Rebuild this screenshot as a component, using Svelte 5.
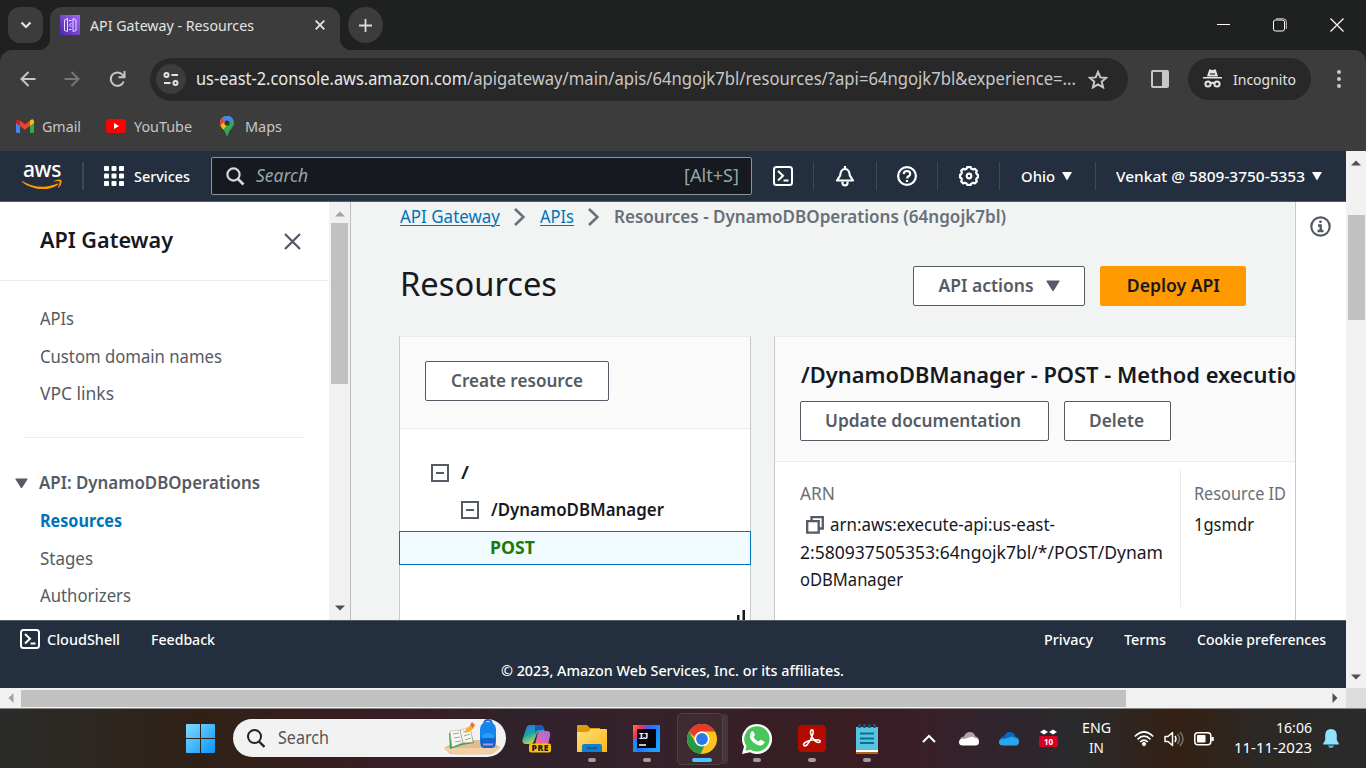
<script>
  // Scales a run of text horizontally so that it fills the given width.
  function fit(node, width) {
    const natural = node.getBoundingClientRect().width;
    node.style.width = `${width}px`;
    node.style.transform = `scaleX(${width / natural})`;
  }

  const topLinks = [
    ['APIs', 34],
    ['Custom domain names', 182],
    ['VPC links', 74]
  ];
  const apiLinks = [
    ['Resources', 82, true],
    ['Stages', 53],
    ['Authorizers', 91]
  ];
</script>

{#snippet t(text, width)}<span class="fit" use:fit={width}>{text}</span>{/snippet}

{#snippet shell()}
  <svg width="20" height="20" viewBox="0 0 20 20" fill="none" stroke="#fff" stroke-width="2">
    <rect x="1" y="1" width="18" height="18" rx="2.5" />
    <path d="M5 5l5 4.700L5 14.500M10.500 14.500H15.500" />
  </svg>
{/snippet}

{#snippet tri(dir, color)}
  <svg width="10" height="10" viewBox="0 0 10 10" fill={color}>
    {#if dir === 'up'}<path d="M0 7.500L5 2.500L10 7.500z" />
    {:else if dir === 'down'}<path d="M0 2.500h10L5 7.500z" />
    {:else if dir === 'caret'}<path d="M0 1h10L5 9.500z" />
    {:else if dir === 'left'}<path d="M7.500 0v10L2.500 5z" />
    {:else}<path d="M2.500 0v10L7.500 5z" />{/if}
  </svg>
{/snippet}

<div class="screen">
  <header class="titlebar">
    <button class="tabsearch"><svg width="12" height="8" viewBox="0 0 12 8" fill="none" stroke="#e3e3e3" stroke-width="2.200"><path d="M1.500 1.500L6 6l4.500-4.500" /></svg></button>
    <div class="tab">
      <svg class="fav" width="20" height="20" viewBox="0 0 20 20">
        <defs><linearGradient id="fv" x1="0" y1="1" x2="1" y2="0"><stop offset="0" stop-color="#4d27a8" /><stop offset="1" stop-color="#a166ff" /></linearGradient></defs>
        <rect width="20" height="20" fill="url(#fv)" />
        <g fill="none" stroke="#e6dcfb" stroke-width="1"><path d="M7.500 3.500L4.500 5v10.500L7.500 16.500zM13 3.500l3 1.500v10.500l-3 1zM9 5.500h2.500M9 14.500h2.500M11.500 8L9.500 10l2 2" /></g>
      </svg>
      <span class="tabtitle">{@render t('API Gateway - Resources', 164)}</span>
      <svg class="tabx" width="10" height="10" viewBox="0 0 10 10" stroke="#e3e3e3" stroke-width="1.800"><path d="M.7.7l8.600 8.600M9.300.7L.7 9.300" /></svg>
    </div>
    <button class="newtab"><svg width="13" height="13" viewBox="0 0 13 13" stroke="#dadada" stroke-width="1.800"><path d="M6.500 0v13M0 6.500h13" /></svg></button>
    <div class="winctl">
      <svg width="13" height="13" viewBox="0 0 13 13" stroke="#fff"><path d="M0 6.500h13" /></svg>
      <svg width="14" height="14" viewBox="0 0 14 14" fill="none" stroke="#fff"><rect x=".5" y="2" width="11" height="11" rx="2" /><path d="M3 .8h7.500a2.800 2.800 0 0 1 2.800 2.800V11" stroke="#ccc" /></svg>
      <svg width="14" height="14" viewBox="0 0 14 14" stroke="#fff" stroke-width="1.200"><path d="M.5.5l13 13M13.500.5l-13 13" /></svg>
    </div>
  </header>

  <div class="toolbar">
    <svg class="back" width="16" height="16" viewBox="0 0 16 16" fill="none" stroke="#c7c7c7" stroke-width="2"><path d="M15.500 8H2M8.500 1L1.500 8l7 7" /></svg>
    <svg class="fwd" width="16" height="16" viewBox="0 0 16 16" fill="none" stroke="#777" stroke-width="2"><path d="M.5 8H14M7.500 1l7 7-7 7" /></svg>
    <svg class="reload" width="17" height="17" viewBox="0 0 17 17" fill="none" stroke="#c7c7c7" stroke-width="2"><path d="M14.700 10.500a6.700 6.700 0 1 1-1-6.500L15.500 6" /><path d="M15.500 0v6.300H9.500" /></svg>
    <div class="omni">
      <span class="site"><svg width="16" height="14" viewBox="0 0 16 14" fill="none" stroke="#e3e3e3" stroke-width="2"><circle cx="3.500" cy="3" r="2" /><path d="M8.500 3H15M1 11h6.500" /><circle cx="12.500" cy="11" r="2" /></svg></span>
      <span class="url"><b>{@render t('us-east-2.console.aws.amazon.com', 271)}</b>{@render t('/apigateway/main/apis/64ngojk7bl/resources/?api=64ngojk7bl&experience=...', 609)}</span>
      <svg class="star" width="20" height="19" viewBox="0 0 20 19" fill="none" stroke="#c7c7c7" stroke-width="2"><path d="M10 2l2.300 5.400 5.800.5-4.400 3.800 1.400 5.700L10 14.300l-5.100 3.100 1.400-5.700L1.900 7.900l5.800-.5z" /></svg>
    </div>
    <svg class="side" width="18" height="18" viewBox="0 0 18 18"><rect x="1" y="1" width="16" height="16" rx="1" fill="none" stroke="#c7c7c7" stroke-width="2" /><path d="M11 1h6v16h-6z" fill="#c7c7c7" /></svg>
    <div class="incog">
      <svg width="19" height="19" viewBox="0 0 19 19" fill="#e3e3e3"><path d="M4 7.500L6 1.200Q6.500 0 7.500.5L9.500 1.300 11.500.5Q12.500 0 13 1.200L15 7.500zM0 8h19v1.600H0z" /><path d="M7 5h5" stroke="#282828" stroke-width="1.200" /><g fill="none" stroke="#e3e3e3" stroke-width="2"><circle cx="5" cy="15" r="2.600" /><circle cx="14" cy="15" r="2.600" /><path d="M7.500 14.500q2-1.500 4 0" /></g></svg>
      <span>{@render t('Incognito', 63)}</span>
    </div>
    <svg class="dots" width="4" height="18" viewBox="0 0 4 18" fill="#c7c7c7"><circle cx="2" cy="2" r="2" /><circle cx="2" cy="9" r="2" /><circle cx="2" cy="16" r="2" /></svg>
  </div>

  <nav class="bookmarks">
    <span class="mark"><svg width="18" height="14" viewBox="0 0 18 14"><path d="M0 2v10.500Q0 14 1.500 14H4V5z" fill="#4285f4" /><path d="M18 2v10.500q0 1.500-1.500 1.500H14V5z" fill="#34a853" /><path d="M14 1.500V7l4-3V2q-.5-3-3-1.200z" fill="#fbbc04" /><path d="M4 1.500V7L0 4V2Q.5-1 3 .8z" fill="#c5221f" /><path d="M4 1.500l5 3.800 5-3.800V7l-5 3.800L4 7z" fill="#ea4335" /></svg>{@render t('Gmail', 39)}</span>
    <span class="mark"><svg width="20" height="14" viewBox="0 0 20 14"><rect width="20" height="14" rx="3.500" fill="#f00" /><path d="M8 4v6l5-3z" fill="#fff" /></svg>{@render t('YouTube', 58)}</span>
    <span class="mark"><svg width="14" height="20" viewBox="0 0 14 20"><clipPath id="pin"><path d="M7 0a7 7 0 0 1 7 7c0 4.500-5 6.500-6.300 12.200q-.7 1.600-1.400 0C5 13.500 0 11.500 0 7a7 7 0 0 1 7-7z" /></clipPath><g clip-path="url(#pin)"><path d="M0 0h14v20H0z" fill="#34a853" /><path d="M0 0h14L3 13H0z" fill="#fbbc04" /><path d="M0 0h12L2 11H0z" fill="#4285f4" /><path d="M0 0h5L7 7l-6 4H0z" fill="#ea4335" /><path d="M3 0h11v5L7 7 2.500 2.500z" fill="#4285f4" /><path d="M0 10l5-5 3 3-6 7z" fill="#fbbc04" /></g><circle cx="7" cy="7" r="2.600" fill="#343434" /></svg>{@render t('Maps', 37)}</span>
  </nav>

  <div class="viewport">
    <div class="page">
      <header class="aws">
        <div class="logo">
          <span>aws</span>
          <svg width="40" height="11" viewBox="0 0 40 11" fill="#f90"><path d="M.7 2.200C12 9 25 9.200 35.500 4.600q1.500-.5.8.8C28 12 10.500 12 .2 3q-.6-1 .5-.8z" /><path d="M31.500 2.200Q37-.8 39.500 1.200q.7 3.800-2.600 7.300-1 .5-.7-.5 2-4.500 1.300-5.500t-5.500 0q-1 .3-.5-.3z" /></svg>
        </div>
        <i class="sep s0"></i>
        <svg class="grid" width="20" height="20" viewBox="0 0 20 20" fill="#fff">{#each [0, 7.5, 15] as y}{#each [0, 7.5, 15] as x}<rect {x} {y} width="5" height="5" rx="1" />{/each}{/each}</svg>
        <span class="services">{@render t('Services', 56)}</span>
        <div class="search">
          <svg width="19" height="19" viewBox="0 0 19 19" fill="none" stroke="#d5dbdb" stroke-width="2.200"><circle cx="7.500" cy="7.500" r="6.100" /><path d="M12 12l5.500 5.500" stroke-width="2.600" /></svg>
          <em>{@render t('Search', 52)}</em><span>{@render t('[Alt+S]', 55)}</span>
        </div>
        <div class="tools">
          <span class="cell c1">{@render shell()}</span>
          <span class="cell c2"><svg width="20" height="21" viewBox="0 0 20 21" fill="none" stroke="#fff" stroke-width="2.200"><path d="M10 0v3M2 14.500h16L14.800 9.500C14.500 5.500 13 3 10 3S5.500 5.500 5.200 9.500z" stroke-linejoin="round" /><path d="M7.500 15.500v1.800q0 2 2.500 2t2.500-2v-1.800" /></svg></span>
          <span class="cell c3"><svg width="20" height="20" viewBox="0 0 20 20" fill="none" stroke="#fff" stroke-width="2.200"><circle cx="10" cy="10" r="8.900" /><path d="M6.800 8c0-4 6.400-4 6.400 0 0 2.500-3.200 2-3.200 4.500" /><path d="M10 14v2" /></svg></span>
          <span class="cell c4"><svg width="20" height="20" viewBox="0 0 20 20" fill="none" stroke="#fff" stroke-width="2.200" stroke-linejoin="round"><path d="M8.200 1.200h3.600l.6 1.600 1.700.7 1.700-.7 2 2-.7 1.700.7 1.700 1.200.6v2.600l-1.200.6-.7 1.700.7 1.700-2 2-1.700-.7-1.700.7-.6 1.400H8.200l-.6-1.400-1.700-.7-1.700.7-2-2 .7-1.700-.7-1.700-1.200-.6V8.800l1.200-.6.7-1.700-.7-1.700 2-2 1.700.7 1.700-.7z" /><circle cx="10" cy="10" r="2.300" /></svg></span>
          <span class="cell c5">{@render t('Ohio', 34)}{@render tri('caret', '#fff')}</span>
          <span class="cell c6">{@render t('Venkat @ 5809-3750-5353', 189)}{@render tri('caret', '#fff')}</span>
        </div>
      </header>

      <div class="body">
        <aside>
          <div class="sidehead"><h2>{@render t('API Gateway', 133)}</h2><svg width="17" height="17" viewBox="0 0 17 17" stroke="#545b64" stroke-width="2.300"><path d="M1 1l15 15M16 1L1 16" /></svg></div>
          <ul>{#each topLinks as [name, w]}<li>{@render t(name, w)}</li>{/each}</ul>
          <hr />
          <div class="group"><svg width="13" height="11" viewBox="0 0 13 11" fill="#545b64"><path d="M1 .5h11q1 0 .4 1L7.300 9.500q-.8 1.200-1.600 0L.6 1.500Q0 .5 1 .5z" /></svg>{@render t('API: DynamoDBOperations', 221)}</div>
          <ul class="sub">{#each apiLinks as [name, w, on]}<li class:on>{@render t(name, w)}</li>{/each}</ul>
        </aside>
        <div class="vscroll inner">{@render tri('up', '#a3a3a3')}<div class="thumb"></div>{@render tri('down', '#505050')}</div>

        <main>
          <div class="crumbs">
            <span class="crumb">{@render t('API Gateway', 100)}</span>
            <svg width="11" height="18" viewBox="0 0 11 18" fill="none" stroke="#687078" stroke-width="2.600"><path d="M1 1l8.500 8L1 17" /></svg>
            <span class="crumb">{@render t('APIs', 34)}</span>
            <svg width="11" height="18" viewBox="0 0 11 18" fill="none" stroke="#687078" stroke-width="2.600"><path d="M1 1l8.500 8L1 17" /></svg>
            <strong>{@render t('Resources - DynamoDBOperations (64ngojk7bl)', 392)}</strong>
          </div>
          <div class="heading">
            <h1>{@render t('Resources', 157)}</h1>
            <button class="btn actions">{@render t('API actions', 95)}<svg width="14" height="12" viewBox="0 0 14 12" fill="#545b64"><path d="M1 .5h12q1 0 .4 1L7.800 10.500q-.8 1.200-1.600 0L.6 1.500Q0 .5 1 .5z" /></svg></button>
            <button class="btn primary">{@render t('Deploy API', 93)}</button>
          </div>
          <div class="panels">
            <section class="tree">
              <div class="treehead"><button class="btn">{@render t('Create resource', 132)}</button></div>
              <div class="node root"><i class="minus"></i>{@render t('/', 8)}</div>
              <div class="node child"><i class="minus"></i>{@render t('/DynamoDBManager', 173)}</div>
              <div class="node post">{@render t('POST', 45)}</div>
              <svg class="grip" width="8" height="10" viewBox="0 0 8 10" fill="#16191f"><path d="M0 5h2.500v5H0zM5.500 0H8v10H5.500z" /></svg>
            </section>
            <section class="method">
              <div class="methodhead">
                <h3>{@render t('/DynamoDBManager - POST - Method execution', 509)}</h3>
                <div class="btnrow"><button class="btn upd">{@render t('Update documentation', 196)}</button><button class="btn del">{@render t('Delete', 55)}</button></div>
              </div>
              <div class="details">
                <div class="arn">
                  <p class="label">{@render t('ARN', 35)}</p>
                  <p class="first"><svg width="18" height="18" viewBox="0 0 18 18" fill="none" stroke="#545b64" stroke-width="2.300"><path d="M1.200 5.200h11.500v11.500H1.200zM5.500 5V1.200h11.300v11.300H13" /></svg>{@render t('arn:aws:execute-api:us-east-', 225)}</p>
                  <p>{@render t('2:580937505353:64ngojk7bl/*/POST/Dynam', 363)}</p>
                  <p>{@render t('oDBManager', 103)}</p>
                </div>
                <div class="rid"><p class="label">{@render t('Resource ID', 92)}</p><p>{@render t('1gsmdr', 60)}</p></div>
              </div>
            </section>
          </div>
        </main>
        <div class="help"><svg width="21" height="21" viewBox="0 0 21 21" fill="none" stroke="#545b64" stroke-width="2.200"><circle cx="10.500" cy="10.500" r="9.200" /><path d="M10.500 4.500v2.600M8 9.500h2.700v5.500M7.500 15h6" stroke-width="2.400" /></svg></div>
      </div>

      <footer>
        <div class="links"><span class="cs">{@render shell()}{@render t('CloudShell', 73)}</span><span class="fb">{@render t('Feedback', 64)}</span><span class="right">{@render t('Privacy', 49)}</span><span>{@render t('Terms', 42)}</span><span>{@render t('Cookie preferences', 129)}</span></div>
        <div class="copy">{@render t('© 2023, Amazon Web Services, Inc. or its affiliates.', 343)}</div>
      </footer>
    </div>
    <div class="vscroll outer">{@render tri('up', '#505050')}<div class="thumb"></div>{@render tri('down', '#505050')}</div>
  </div>
  <div class="hscroll">{@render tri('left', '#a3a3a3')}<div class="thumb"></div>{@render tri('right', '#505050')}<i></i></div>

  <div class="taskbar">
    <svg class="win" width="29" height="29" viewBox="0 0 29 29"><defs><linearGradient id="wg" x1="0" y1="0" x2="1" y2="1"><stop offset="0" stop-color="#7fdcff" /><stop offset="1" stop-color="#0a93f8" /></linearGradient></defs><path d="M1 0h13v14H0V1q0-1 1-1zM15 0h13q1 0 1 1v13H15zM0 15h14v14H1q-1 0-1-1zM15 15h14v13q0 1-1 1H15z" fill="url(#wg)" /></svg>
    <div class="tsearch">
      <svg width="18" height="19" viewBox="0 0 18 19" fill="none" stroke="#222" stroke-width="2"><circle cx="7.500" cy="7.500" r="6.500" /><path d="M12 12.500l5.500 5.500" stroke-width="2.400" /></svg>
      {@render t('Search', 51)}
      <svg class="art" width="58" height="33" viewBox="0 0 58 33"><path d="M1 26Q14 17 33 18t24 8l-8 6q-20 1-42 0z" fill="#e2bd91" /><path d="M1 26h56l-6 5q-22 2-43 0z" fill="#f1d0a8" /><path d="M6 11l11-3 10-2 4 15-12 2-12 4z" fill="#3d9c47" /><path d="M7 9l10-1 10-3 3 15-11 1-10 4z" fill="#f7f7f3" stroke="#b9bcae" stroke-width=".7" /><path d="M17 8l3 13M10 12l6-1M11 16l6-1M12 20l6-1M20 10l6-2M21 14l6-2M22 18l6-2" stroke="#8b9385" stroke-width=".8" fill="none" /><path d="M22 11l1-4 5-4 3 3-5 4z" fill="#ffad23" /><path d="M27 3l2-3 3 3-2 3z" fill="#ef645c" /><path d="M41 3Q41-2 45-2t4 5" stroke="#2165c9" stroke-width="1.800" fill="none" /><rect x="37" y="0" width="16" height="26" rx="7" fill="#1386ed" /><rect x="37.500" y="13" width="15" height="13" rx="4" fill="#0f65c9" /><path d="M38.500 16q0-5 6.500-5t6.500 5" fill="#299cf5" /><path d="M40 22.500h10" stroke="#b18bed" stroke-width="2" /></svg>
    </div>
    <div class="apps">
      <div class="app"><svg width="30" height="28" viewBox="0 0 30 28"><defs><linearGradient id="ca" x1="0" y1="0" x2=".5" y2="1"><stop offset="0" stop-color="#2374e0" /><stop offset=".5" stop-color="#1aa5a8" /><stop offset="1" stop-color="#d4dc45" /></linearGradient><linearGradient id="cb" x1="1" y1="0" x2="0" y2="1"><stop offset="0" stop-color="#a866f0" /><stop offset="1" stop-color="#f56a88" /></linearGradient></defs><path d="M8 0h10q3 0 4 4l1 3h-5q-3 0-4 4l-2 5q-1 3-4 3H4q-5 0-3-6L4 4q1-4 4-4z" fill="url(#ca)" /><path d="M13 0h5q3 0 4 5h-5q-3 0-4 4z" fill="#1856c5" /><path d="M19 6h6q4 0 3 5l-2 9H13l2-9q1-5 4-5z" fill="url(#cb)" /><rect x="7" y="18.500" width="22" height="9" rx="2" fill="#fcbf0a" /><text x="18" y="26.200" text-anchor="middle" font-size="8.500" font-weight="900" textLength="17" fill="#16191f">PRE</text></svg></div>
      <div class="app run"><svg width="30" height="27" viewBox="0 0 30 27"><defs><linearGradient id="fo" x1="0" y1="0" x2="1" y2="1"><stop offset="0" stop-color="#ffe080" /><stop offset="1" stop-color="#f9b716" /></linearGradient></defs><path d="M0 1q0-1 1-1h9l3 3h10v10H0z" fill="#dd9c0c" /><path d="M0 7h11l3-3h15q1 0 1 1v22H0z" fill="url(#fo)" /><path d="M5 27v-6q0-2 2-2h16q2 0 2 2v6z" fill="#117fcb" /><path d="M10 23h10" stroke="#07518f" stroke-width="1.500" /></svg></div>
      <div class="app run"><svg width="27" height="27" viewBox="0 0 27 27"><defs><linearGradient id="ij" x1="0" y1="0" x2="1" y2=".6"><stop offset="0" stop-color="#fd8224" /><stop offset=".25" stop-color="#f72b63" /><stop offset=".5" stop-color="#246dff" /><stop offset="1" stop-color="#18a5fc" /></linearGradient></defs><rect width="27" height="27" fill="url(#ij)" /><path d="M0 14h4v13H0z" fill="#198cf5" /><rect x="4" y="4" width="19" height="19" fill="#09040c" /><text x="5.500" y="14" font-size="9.500" font-weight="700" textLength="10" font-family="Liberation Mono" fill="#fff">IJ</text><path d="M6 20h7" stroke="#fff" stroke-width="1.500" /></svg></div>
      <div class="app active"><svg width="30" height="30" viewBox="0 0 30 30"><circle cx="15" cy="15" r="15" fill="#fcc31e" /><path d="M2 7.500A15 15 0 0 1 28 7.500H15q-6 0-7.500 5.500z" fill="#e33b2e" /><path d="M2 7.500L8.500 18.700q3 4.500 9 3L13.500 29.900A15 15 0 0 1 2 7.500z" fill="#279847" /><circle cx="15" cy="15" r="7.500" fill="#fff" /><circle cx="15" cy="15" r="5.900" fill="#2979e8" /></svg></div>
      <div class="app run"><svg width="30" height="30" viewBox="0 0 30 30"><path d="M15 0a15 15 0 1 1-7 28.200L0 30l2-7.500A15 15 0 0 1 15 0z" fill="#fff" /><path d="M15 2.300A12.600 12.600 0 1 1 8.500 25.700L3.300 26.800 4.500 22A12.600 12.600 0 0 1 15 2.300z" fill="#48c65c" /><path d="M8.500 8.500q1.500-2 3-1l1.500 3.500-1.500 2q2 3.500 5 4.500l2-1.800 3.800 1.800q.8 1-1.200 3-2.500 2.200-7-.3Q8.500 17 7.800 12.500z" fill="#fff" /></svg></div>
      <div class="app run"><svg width="28" height="27" viewBox="0 0 28 27"><rect width="28" height="27" rx="4" fill="#b30b00" /><path d="M6 20.500q-1.500-1.500 2-3.500c4-2 8-2.600 12.500-2q3 .8 1 2.300-2 .9-5-2Q13 11.500 12.500 8q0-3.200 1.600-3.200t.8 4.200Q13 15.500 9 20q-2 1.500-3 .5z" stroke="#fff" stroke-width="1.600" fill="none" /></svg></div>
      <div class="app run"><svg width="22" height="30" viewBox="0 0 22 30"><path d="M0 3h22v26H0z" fill="#58c4df" /><path d="M0 26h22v2H0z" fill="#fff" /><path d="M0 28h22v2H0z" fill="#b7641c" /><path d="M3.500 0v4M8.500 0v4M13.500 0v4M18.500 0v4" stroke="#075e80" stroke-width="2.400" /><path d="M4 9.500h14M4 14.500h14M4 19h14" stroke="#08708f" stroke-width="2" /></svg></div>
    </div>
    <div class="tray">
      <svg width="14" height="9" viewBox="0 0 14 9" fill="none" stroke="#fff" stroke-width="2"><path d="M1 8l6-6 6 6" /></svg>
      <svg class="cl" width="20" height="14" viewBox="0 0 20 14"><path d="M2 9q-2-4 3-4.500Q6.500 0 11 0q4 0 5.500 4.500Q20 5 20 9z" fill="#aaa5a8" /><path d="M0 10.500Q0 6 5 7l5-1.500q3-1.500 6 .5 4 .5 4 4 0 3.500-4 3.500H4q-4 0-4-3z" fill="#fff" /></svg>
      <svg class="cl" width="20" height="14" viewBox="0 0 20 14"><path d="M2 9q-2-4 3-4.500Q6.500 0 11 0q4 0 5.500 4.500Q20 5 20 9z" fill="#0867c8" /><path d="M0 10.500Q0 6 5 7l5-1.500q3-1.500 6 .5 4 .5 4 4 0 3.500-4 3.500H4q-4 0-4-3z" fill="#28a8ea" /></svg>
      <svg class="bad" width="19" height="18" viewBox="0 0 19 18"><path d="M1 3L5 .5l4 2.500-4 2.500zM18 3L14 .5 10 3l4 2.500z" fill="#fff" /><rect y="7" width="19" height="11" rx="2" fill="#d70022" /><text x="9.500" y="15.500" text-anchor="middle" font-size="8" font-weight="700" fill="#fff">10</text></svg>
      <div class="lang"><span>{@render t('ENG', 29)}</span><span>{@render t('IN', 15)}</span></div>
      <svg class="wifi" width="20" height="15" viewBox="0 0 20 15" fill="none" stroke="#fff" stroke-width="1.700"><path d="M.8 5.500q9.200-9 18.400 0M3.500 8.300q6.500-6.300 13 0M6.200 11q3.800-3.600 7.600 0" /><circle cx="10" cy="13" r="1.200" fill="#fff" /></svg>
      <svg class="vol" width="20" height="16" viewBox="0 0 20 16" fill="none" stroke="#fff" stroke-width="1.500"><path d="M1 5.500h3L8.500 1.500v13L4 10.500H1z" stroke-linejoin="round" /><path d="M11 5q2 3 0 6" /><path d="M13.500 3q4 5 0 10M16 1q6 7 0 14" stroke="#77706c" /></svg>
      <svg class="bat" width="20" height="14" viewBox="0 0 20 14" fill="none" stroke="#fff" stroke-width="1.500"><rect x=".8" y=".8" width="16" height="12" rx="3" /><rect x="3" y="3" width="8.500" height="7.600" rx="1" fill="#fff" stroke="none" /><path d="M18.500 5v4" stroke-width="2.500" /></svg>
      <div class="clock"><span>{@render t('16:06', 36)}</span><span>{@render t('11-11-2023', 78)}</span></div>
      <svg class="bell" width="16" height="19" viewBox="0 0 16 19" fill="#8fe3ff"><path d="M8 0q5.500 0 5.800 6v5l2 3.500q.4 1-1 1H1.200q-1.400 0-1-1l2-3.500V6Q2.500 0 8 0z" /><path d="M5 16.500h6q-.5 2.500-3 2.500t-3-2.500z" fill="#4fb8e0" /></svg>
    </div>
  </div>
</div>

<style>
  :global(body) { margin: 0; overflow: hidden; }
  .screen { width: 1366px; height: 768px; overflow: hidden; display: flex; flex-direction: column; font: 17.300px/24px "Noto Sans", "Open Sans", sans-serif; background: #1f2020; color: #16191f; }
  .screen * { box-sizing: border-box; }
  svg { display: block; flex: none; }
  button { font: inherit; border: 0; padding: 0; }
  h1, h2, h3, p, ul { margin: 0; padding: 0; }
  .fit { display: inline-block; white-space: nowrap; transform-origin: 0 50%; vertical-align: top; flex: none; }

  .titlebar { height: 50px; flex: none; display: flex; background: #1f2120; padding: 7px 22px 0 8px; font-size: 15px; }
  .tabsearch { width: 35px; height: 36px; border-radius: 12px; background: #3c3c3c; display: flex; align-items: center; justify-content: center; }
  .tab { position: relative; margin-left: 7px; width: 290px; height: 43px; background: #3c3c3c; border-radius: 12px 12px 0 0; display: flex; padding: 8px 15px 0 10px; color: #e3e3e3; }
  .tab::before, .tab::after { content: ""; position: absolute; bottom: 0; width: 12px; height: 12px; }
  .tab::before { left: -12px; background: radial-gradient(circle at 0 0, transparent 12px, #3c3c3c 12.500px); }
  .tab::after { right: -12px; background: radial-gradient(circle at 100% 0, transparent 12px, #3c3c3c 12.500px); }
  .tabtitle { margin: -2px auto 0 10px; }
  .tabx { margin-top: 5px; }
  .newtab { width: 35px; height: 36px; margin-left: 8px; border-radius: 50%; background: #3c3c3c; display: flex; align-items: center; justify-content: center; }
  .winctl { margin-left: auto; display: flex; gap: 43px; padding-top: 11px; }
  .toolbar { height: 58px; flex: none; background: #3c3c3c; border-radius: 12px 12px 0 0; display: flex; align-items: center; padding: 0 25px 0 20px; color: #e3e3e3; }
  .fwd { margin-left: 28px; }
  .reload { margin-left: 29px; }
  .omni { width: 978px; height: 43px; margin-left: 24px; border-radius: 22px; background: #282828; display: flex; align-items: center; padding: 0 20px 0 6px; }
  .site { width: 30px; height: 30px; border-radius: 50%; background: #3c3c3c; display: flex; align-items: center; justify-content: center; }
  .url { display: flex; margin-left: 10px; color: #c7c7c7; }
  .url b { font-weight: 400; color: #e9e9e9; }
  .star { margin-left: auto; }
  .side { margin-left: 23px; }
  .incog { width: 123px; height: 42px; margin-left: 19px; border-radius: 21px; background: #282828; display: flex; align-items: center; padding: 0 0 1px 15px; font-size: 15px; }
  .incog > span { margin-left: 11px; }
  .dots { margin-left: auto; }
  .bookmarks { height: 43px; flex: none; background: #3c3c3c; display: flex; padding: 5px 0 0 16px; font-size: 15px; color: #c7c7c7; }
  .mark { display: flex; align-items: center; height: 26px; margin-right: 25px; gap: 8px; padding-bottom: 1px; }
  .mark:nth-child(2) { margin-right: 28px; }
  .mark:nth-child(3) { gap: 11px; }

  .viewport { height: 537px; flex: none; display: flex; }
  .page { width: 1346px; display: flex; flex-direction: column; background: #f2f3f3; }
  .aws { height: 51px; flex: none; background: #232f3e; border-bottom: 1px solid #545b64; display: flex; align-items: center; color: #fff; font-size: 15px; font-weight: 500; padding-left: 22px; }
  .logo { width: 40px; }
  .logo span { display: block; font: 500 21px/18px "Noto Sans"; letter-spacing: -.4px; padding-left: 1px; margin-top: -2px; }
  .logo svg { margin-top: 1px; }
  .sep { width: 2px; height: 28px; background: #414750; margin: 0 21px 0 20px; }
  .s0 { margin-right: 20px; }
  .services { margin-left: 10px; }
  .search { width: 541px; height: 38px; margin-left: 21px; border: 1px solid #879596; border-radius: 2px; background: #16191f; display: flex; align-items: center; padding: 0 12px 0 14px; color: #95a5a6; font-size: 17.300px; font-weight: 400; }
  .search em { margin-left: 11px; }
  .search > span { margin-left: auto; }
  .tools { display: flex; align-items: center; }
  .cell { height: 28px; display: flex; align-items: center; border-right: 1px solid #414750; }
  .c1 { width: 62px; padding-left: 21px; }
  .c2 { width: 63px; padding-left: 21px; }
  .c3 { width: 61px; padding-left: 20px; }
  .c4 { width: 62px; padding-left: 21px; }
  .c5 { width: 96px; padding-left: 21px; gap: 7px; }
  .c6 { padding-left: 20px; gap: 7px; border: 0; }

  .body { height: 418px; flex: none; display: flex; overflow: hidden; }
  aside { width: 329px; background: #fff; color: #545b64; overflow: hidden; }
  .sidehead { height: 79px; border-bottom: 1px solid #eaeded; display: flex; align-items: center; justify-content: space-between; padding: 0 28px 0 40px; }
  h2 { font-size: 22px; font-weight: 600; color: #16191f; line-height: 28px; margin-top: -4px; }
  ul { list-style: none; padding: 19px 0 0 40px; }
  li { height: 37.500px; line-height: 37.500px; }
  hr { border: 0; height: 1px; background: #eaeded; margin: 24.500px 25px 0; }
  .group { display: flex; align-items: center; gap: 11px; font-weight: 600; padding-left: 15px; height: 38px; margin-top: 26px; }
  .sub { padding-top: 0; }
  .on { color: #0073bb; font-weight: 700; }
  .vscroll { background: #f1f1f1; display: flex; flex-direction: column; align-items: center; }
  .vscroll .thumb { background: #c1c1c1; }
  .inner { width: 22px; border-right: 1px solid #b9bfc3; padding: 7px 0; flex: none; }
  .inner .thumb { width: 17px; height: 161px; margin: 4px 0 auto; }
  .outer { width: 20px; padding: 7px 0 6px; }
  .outer .thumb { width: 17px; height: 105px; margin: 47px 0 auto 1px; }
  main { width: 944px; overflow: hidden; padding-left: 48px; background: #f2f3f3; flex: none; }
  .crumbs { height: 30px; display: flex; align-items: center; padding-left: 1px; }
  .crumb { color: #0073bb; height: 24px; }
  .crumb :global(.fit) { text-decoration: underline; text-underline-offset: 2px; text-decoration-thickness: 1px; }
  .crumbs svg { margin: 0 15px 0 14px; }
  .crumbs strong { font-weight: 600; color: #687078; height: 24px; }
  .heading { display: flex; padding: 34px 49px 0 1px; height: 104px; }
  h1 { font-size: 33.500px; font-weight: 400; line-height: 34px; margin-right: auto; }
  .btn { height: 40px; border: 1px solid #545b64; border-radius: 2px; background: #fff; color: #545b64; font-weight: 600; display: flex; align-items: center; justify-content: center; padding-bottom: 1px; }
  .actions { width: 172px; gap: 13px; }
  .primary { width: 146px; margin-left: 15px; background: #f90; border-color: #f90; color: #16191f; padding-right: 2px; }
  .panels { display: flex; gap: 23px; height: 290px; }
  section { background: #fff; border: 1px solid #c5cacd; border-top-color: #eaeded; flex: none; }
  .tree { width: 352px; display: flex; flex-direction: column; font-weight: 600; }
  .treehead { height: 92px; background: #fafafa; border-bottom: 1px solid #eaeded; padding: 24px 0 0 25px; }
  .treehead .btn { width: 184px; }
  .node { height: 37.500px; display: flex; align-items: center; gap: 12px; }
  .root { margin-top: 25px; padding-left: 31px; }
  .child { padding-left: 61px; }
  .minus { width: 18px; height: 18px; border: 2px solid #545b64; display: flex; align-items: center; justify-content: center; }
  .minus::after { content: ""; width: 8px; height: 2px; background: #545b64; }
  .post { height: 34px; margin: 2px -1px 0; border: 1px solid #0073bb; background: #f1faff; color: #1d7b04; font-weight: 700; padding: 0 0 1px 90px; }
  .grip { margin: auto 5px 5px auto; }
  .method { width: 620px; }
  .methodhead { height: 125px; background: #fafafa; border-bottom: 1px solid #eaeded; padding: 23px 0 0 26px; }
  h3 { font-size: 22px; font-weight: 600; line-height: 28px; height: 41px; }
  .btnrow { display: flex; gap: 15px; margin-left: -1px; }
  .upd { width: 249px; padding-right: 4px; }
  .del { width: 107px; padding-right: 2px; }
  .details { display: flex; padding: 8px 0 0 25px; }
  .arn { width: 381px; height: 137px; border-right: 1px solid #eaeded; padding-top: 10px; }
  .details p { height: 27.500px; line-height: 27.500px; }
  .details .label { color: #687078; height: 31px; }
  .details .first { display: flex; align-items: center; gap: 6px; padding-left: 6px; }
  .rid { padding: 10px 0 0 13px; }
  .help { width: 51px; background: #fff; border-left: 1px solid #c5cacd; padding: 14px 0 0 14px; }
  footer { height: 68px; background: #232f3e; border-top: 1px solid #545b64; color: #fff; font-size: 15px; font-weight: 500; }
  .links { display: flex; align-items: center; gap: 31px; padding: 0 20px; height: 36px; }
  .cs { display: flex; align-items: center; gap: 7px; }
  .right { margin-left: auto; }
  .copy { padding: 1px 0 0 501px; }

  .hscroll { height: 21px; flex: none; background: #f1f1f1; display: flex; align-items: center; padding-left: 6px; border-bottom: 1px solid #8a8887; }
  .hscroll .thumb { width: 1105px; height: 17px; margin: 0 auto 0 5px; background: #c1c1c1; }
  .hscroll i { width: 20px; height: 20px; margin-left: 6px; background: #dcdcdc; }

  .taskbar { height: 59px; flex: none; display: flex; background: linear-gradient(90deg, #2b2c2a 0, #302116 200px, #351f1d 300px, #3a1d28 410px, #30222a 510px, #35212a 650px, #391d23 850px, #3a1e27 910px, #30242d 1000px, #2a2a2b 1080px, #342013 1180px, #2c2825 1260px, #292b2b 1366px); color: #fff; position: relative; }
  .win { margin: 15px 18px 0 186px; }
  .tsearch { width: 273px; height: 38px; margin-top: 10px; border-radius: 19px; background: #f3f2f2; color: #555; display: flex; align-items: center; gap: 13px; padding-left: 14px; }
  .art { margin: 0 5px 0 auto; overflow: visible; }
  .apps { display: flex; margin-left: 3px; }
  .app { width: 55px; height: 59px; position: relative; display: flex; align-items: center; justify-content: center; }
  .app.run::after, .app.active::after { content: ""; position: absolute; bottom: 6px; width: 8px; height: 4px; border-radius: 2px; background: #a59b9d; }
  .app.active::after { width: 20px; background: #4cc2ff; }
  .app.active::before { content: ""; position: absolute; left: 3px; top: 4px; width: 44px; height: 50px; border: 1px solid #514044; border-radius: 5px; background: #46343880; box-shadow: 6px 0 0 -1px #46363a; }
  .app svg { position: relative; }
  .tray { margin-left: auto; display: flex; align-items: center; padding-right: 27px; font-size: 15px; }
  .tray .cl { margin-left: 23px; }
  .tray .cl + .cl { margin-left: 20px; }
  .bad { margin: -2px 0 0 20px; }
  .lang { width: 29px; margin-left: 24px; display: flex; flex-direction: column; align-items: center; line-height: 20px; }
  .lang span, .clock span { height: 20px; }
  .lang, .clock { margin-top: -3px; }
  .wifi { margin-left: 23px; }
  .vol { margin-left: 10px; }
  .bat { margin-left: 10px; }
  .clock { margin-left: 20px; display: flex; flex-direction: column; align-items: flex-end; line-height: 20px; }
  .bell { margin-left: 11px; }
</style>
